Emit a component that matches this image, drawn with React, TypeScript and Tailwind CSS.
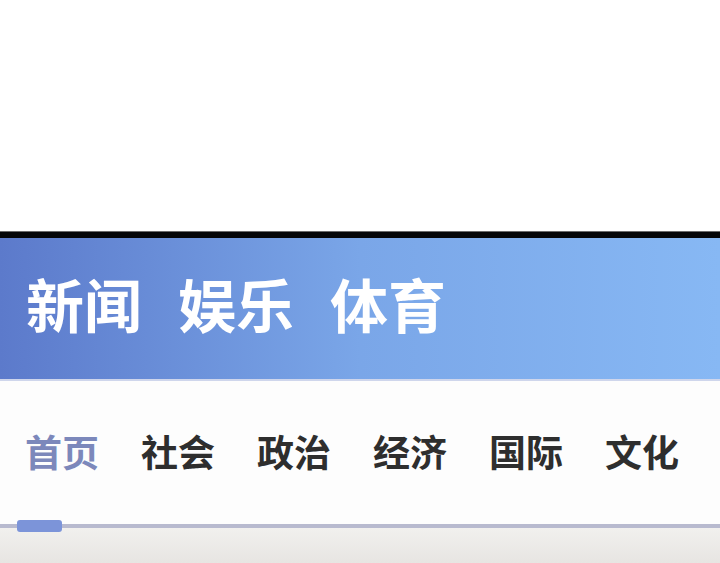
const HEAD = ["新闻", "娱乐", "体育"];
const NAV = ["首页", "社会", "政治", "经济", "国际", "文化"];

export default function App() {
  return (
    <div className="w-[720px] h-[563px] flex flex-col bg-white overflow-hidden" style={{ fontFamily: '"Noto Sans CJK SC", "Noto Sans", sans-serif' }}>
      <div className="h-[231px] shrink-0 bg-white" />
      <div className="h-[7px] shrink-0 bg-[#050608] border-t border-[#6b6b6b]" />
      <div className="h-[141px] shrink-0 flex items-center pl-[26px] pb-[12px] gap-[36px] bg-gradient-to-r from-[#5c7acb] via-[#7aa6e8] via-50% to-[#87b8f4]">
        {HEAD.map(t => (
          <span key={t} className="text-[58px] leading-none font-bold text-white">{t}</span>
        ))}
      </div>
      <div className="h-[2px] shrink-0 bg-[#cfd6ec]" />
      <div className="h-[143px] shrink-0 flex items-center pl-[25px] pb-[2px] gap-[42px] bg-[#fdfdfd]">
        {NAV.map((t, i) => (
          <span key={t} className={"text-[37px] leading-none font-bold " + (i === 0 ? "text-[#7c88bb]" : "text-[#2e2e2e]")}>{t}</span>
        ))}
      </div>
      <div className="relative h-[4px] shrink-0 bg-[#b8bacf]">
        <div className="absolute left-[17px] top-[-4px] w-[45px] h-[12px] rounded-[3px] bg-[#7c94d9]" />
      </div>
      <div className="flex-1 bg-gradient-to-b from-[#f1f0ee] to-[#e7e5e2]" />
    </div>
  );
}
